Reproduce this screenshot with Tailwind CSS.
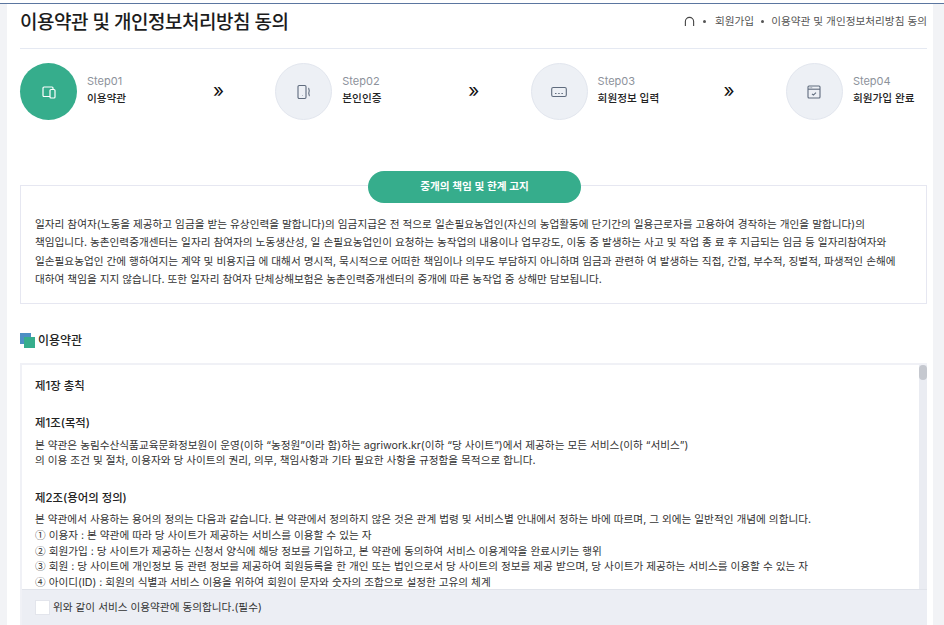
<!DOCTYPE html>
<html lang="ko">
<head>
    <meta charset="UTF-8">
    <title>이용약관 및 개인정보처리방침 동의</title>
    <script src="https://cdn.jsdelivr.net/npm/@tailwindcss/browser@4"></script>
</head>
<body class="bg-white text-[#222] font-['Inter','Noto_Sans_CJK_KR',sans-serif]">
<div class="h-[625px] overflow-hidden flex flex-col">
    <!-- top line -->
    <div class="h-[4px] shrink-0 border-b border-[#5b76a0]"></div>

    <div class="flex flex-1 min-h-0">
        <div class="w-[7px] shrink-0 bg-[#f2f3f6]"></div>

        <main class="w-[926px] pl-[13px] pr-[6px] shrink-0 flex flex-col min-h-0">
            <!-- page title -->
            <div class="h-[45px] shrink-0 flex items-center justify-between border-b border-[#e5e9f2] pb-[6px]">
                <h1 class="text-[19px] leading-[28px] font-medium text-[#1c1c1c] tracking-[-0.5px]">이용약관 및 개인정보처리방침 동의</h1>
                <div class="flex items-center text-[10.65px] text-[#555] mb-[2px]">
                    <svg class="w-[11px] h-[11px] mr-[8px]" viewBox="0 0 12 12" fill="none" stroke="#444" stroke-width="1.2"><path d="M1.5 11V6a4.5 4.5 0 0 1 9 0v5"/></svg>
                    <span class="w-[3px] h-[3px] rounded-full bg-[#555] mr-[9px]"></span>
                    <span>회원가입</span>
                    <span class="w-[3px] h-[3px] rounded-full bg-[#555] mx-[7px]"></span>
                    <span>이용약관 및 개인정보처리방침 동의</span>
                </div>
            </div>

            <!-- steps -->
            <div class="shrink-0 flex mt-[14px]">
                <div class="w-[255.3px] flex items-center">
                    <div class="w-[57px] h-[57px] rounded-full bg-[#36ad8c] flex items-center justify-center">
                        <svg class="w-[16px] h-[16px]" viewBox="0 0 16 16" fill="none" stroke="#fff" stroke-width="1.2"><path d="M9 12.5H3a1 1 0 0 1-1-1V4a1 1 0 0 1 1-1h8a1 1 0 0 1 1 1v1"/><rect x="9" y="5.5" width="5" height="8.5" rx="1"/></svg>
                    </div>
                    <div class="ml-[10px] w-[126px] mb-[3px]">
                        <div class="text-[11px] leading-[18px] text-[#8d929b]">Step01</div>
                        <div class="text-[10.65px] leading-[18px] font-medium text-[#222]">이용약관</div>
                    </div>
                    <span class="text-[19px] leading-none text-[#111] mb-[3px]">»</span>
                </div>
                <div class="w-[255.3px] flex items-center">
                    <div class="w-[57px] h-[57px] rounded-full bg-[#edf0f5] border border-[#e2e6ee] flex items-center justify-center">
                        <svg class="w-[16px] h-[16px]" viewBox="0 0 16 16" fill="none" stroke="#5f6b7d" stroke-width="1.1"><rect x="2" y="1.5" width="8" height="13" rx="1.2"/><path d="M6 11.5h.4"/><path d="M13 4c-1 1 1 2 0 4s1 3 0 4"/></svg>
                    </div>
                    <div class="ml-[10px] w-[126px] mb-[3px]">
                        <div class="text-[11px] leading-[18px] text-[#8d929b]">Step02</div>
                        <div class="text-[10.65px] leading-[18px] font-medium text-[#222]">본인인증</div>
                    </div>
                    <span class="text-[19px] leading-none text-[#111] mb-[3px]">»</span>
                </div>
                <div class="w-[255.3px] flex items-center">
                    <div class="w-[57px] h-[57px] rounded-full bg-[#edf0f5] border border-[#e2e6ee] flex items-center justify-center">
                        <svg class="w-[16px] h-[16px]" viewBox="0 0 16 16" fill="none" stroke="#5f6b7d" stroke-width="1.1"><rect x="0.7" y="3.5" width="14.6" height="9" rx="1.5"/><path d="M4 9.5h1.5M7.2 9.5h1.5M10.4 9.5h1.5"/></svg>
                    </div>
                    <div class="ml-[10px] w-[126px] mb-[3px]">
                        <div class="text-[11px] leading-[18px] text-[#8d929b]">Step03</div>
                        <div class="text-[10.65px] leading-[18px] font-medium text-[#222]">회원정보 입력</div>
                    </div>
                    <span class="text-[19px] leading-none text-[#111] mb-[3px]">»</span>
                </div>
                <div class="flex items-center">
                    <div class="w-[57px] h-[57px] rounded-full bg-[#edf0f5] border border-[#e2e6ee] flex items-center justify-center">
                        <svg class="w-[16px] h-[16px]" viewBox="0 0 16 16" fill="none" stroke="#5f6b7d" stroke-width="1.1"><rect x="2" y="2" width="12" height="12" rx="1"/><path d="M2 5.2h12"/><path d="M3.8 3.6h.5M5.6 3.6h.5"/><path d="M6 9.8l1.4 1.3L10 8.6"/></svg>
                    </div>
                    <div class="ml-[10px] mb-[3px]">
                        <div class="text-[11px] leading-[18px] text-[#8d929b]">Step04</div>
                        <div class="text-[10.65px] leading-[18px] font-medium text-[#222]">회원가입 완료</div>
                    </div>
                </div>
            </div>

            <!-- notice -->
            <div class="shrink-0 mt-[65px] h-[119px] border border-[#e6e7f1] px-[14px]">
                <div class="-mt-[15px] ml-[333px] w-[213px] h-[32px] rounded-full bg-[#36ad8c] text-white text-[10.65px] font-semibold flex items-center justify-center">중개의 책임 및 한계 고지</div>
                <p class="mt-[13px] text-[10.65px] leading-[18.4px] text-[#333] whitespace-nowrap">
                    일자리 참여자(노동을 제공하고 임금을 받는 유상인력을 말합니다)의 임금지급은 전 적으로 일손필요농업인(자신의 농업활동에 단기간의 일용근로자를 고용하여 경작하는 개인을 말합니다)의<br>
                    책임입니다. 농촌인력중개센터는 일자리 참여자의 노동생산성, 일 손필요농업인이 요청하는 농작업의 내용이나 업무강도, 이동 중 발생하는 사고 및 작업 종 료 후 지급되는 임금 등 일자리참여자와<br>
                    일손필요농업인 간에 행하여지는 계약 및 비용지급 에 대해서 명시적, 묵시적으로 어떠한 책임이나 의무도 부담하지 아니하며 임금과 관련하 여 발생하는 직접, 간접, 부수적, 징벌적, 파생적인 손해에<br>
                    대하여 책임을 지지 않습니다. 또한 일자리 참여자 단체상해보험은 농촌인력중개센터의 중개에 따른 농작업 중 상해만 담보됩니다.
                </p>
            </div>

            <!-- section title -->
            <div class="shrink-0 mt-[28px] flex items-center h-[17px]">
                <div class="relative w-[15px] h-[15px] mr-[3px]">
                    <div class="absolute left-0 top-0 w-[11px] h-[11px] bg-[#4c8fc4]"></div>
                    <div class="absolute left-[4px] top-[4px] w-[11px] h-[11px] bg-[#36ad8c]"></div>
                </div>
                <h2 class="text-[12px] font-medium text-[#222]">이용약관</h2>
            </div>

            <!-- terms box -->
            <div class="mt-[14px] flex-1 min-h-0 border-l-2 border-t-2 border-[#f0f1f6] flex flex-col">
                <div class="flex flex-1 min-h-0">
                    <div class="flex-1 min-w-0 overflow-hidden px-[13px] pt-[13px] whitespace-nowrap">
                        <h3 class="text-[11.4px] leading-[16px] font-medium text-[#222]">제1장 총칙</h3>
                        <h3 class="mt-[21px] text-[11.4px] leading-[16px] font-medium text-[#222]">제1조(목적)</h3>
                        <p class="mt-[7px] text-[10.65px] leading-[15px] text-[#333]">
                            본 약관은 농림수산식품교육문화정보원이 운영(이하 “농정원”이라 함)하는 agriwork.kr(이하 “당 사이트”)에서 제공하는 모든 서비스(이하 “서비스”)<br>
                            의 이용 조건 및 절차, 이용자와 당 사이트의 권리, 의무, 책임사항과 기타 필요한 사항을 규정함을 목적으로 합니다.
                        </p>
                        <h3 class="mt-[22px] text-[11.4px] leading-[16px] font-medium text-[#222]">제2조(용어의 정의)</h3>
                        <p class="mt-[7px] text-[10.65px] leading-[14.8px] text-[#333]">
                            본 약관에서 사용하는 용어의 정의는 다음과 같습니다. 본 약관에서 정의하지 않은 것은 관계 법령 및 서비스별 안내에서 정하는 바에 따르며, 그 외에는 일반적인 개념에 의합니다.<br>
                            <span class="font-['Noto_Sans_CJK_KR']">①</span> 이용자 : 본 약관에 따라 당 사이트가 제공하는 서비스를 이용할 수 있는 자<br>
                            <span class="font-['Noto_Sans_CJK_KR']">②</span> 회원가입 : 당 사이트가 제공하는 신청서 양식에 해당 정보를 기입하고, 본 약관에 동의하여 서비스 이용계약을 완료시키는 행위<br>
                            <span class="font-['Noto_Sans_CJK_KR']">③</span> 회원 : 당 사이트에 개인정보 등 관련 정보를 제공하여 회원등록을 한 개인 또는 법인으로서 당 사이트의 정보를 제공 받으며, 당 사이트가 제공하는 서비스를 이용할 수 있는 자<br>
                            <span class="font-['Noto_Sans_CJK_KR']">④</span> 아이디(ID) : 회원의 식별과 서비스 이용을 위하여 회원이 문자와 숫자의 조합으로 설정한 고유의 체계
                        </p>
                    </div>
                    <!-- scrollbar -->
                    <div class="w-[8px] shrink-0 bg-[#eaecf2]">
                        <div class="w-[8px] h-[15px] rounded-full bg-[#c5c8cf]"></div>
                    </div>
                </div>
                <!-- agree -->
                <div class="h-[36px] shrink-0 bg-[#eceef4] border-t border-[#e0e3ea] flex items-center pl-[13px]">
                    <span class="w-[15px] h-[15px] bg-white border border-[#e3e5ec] mr-[3px]"></span>
                    <span class="text-[10.65px] text-[#333]">위와 같이 서비스 이용약관에 동의합니다.(필수)</span>
                </div>
            </div>
        </main>

        <div class="flex-1 bg-[#f2f3f6]"></div>
    </div>
</div>
</body>
</html>
